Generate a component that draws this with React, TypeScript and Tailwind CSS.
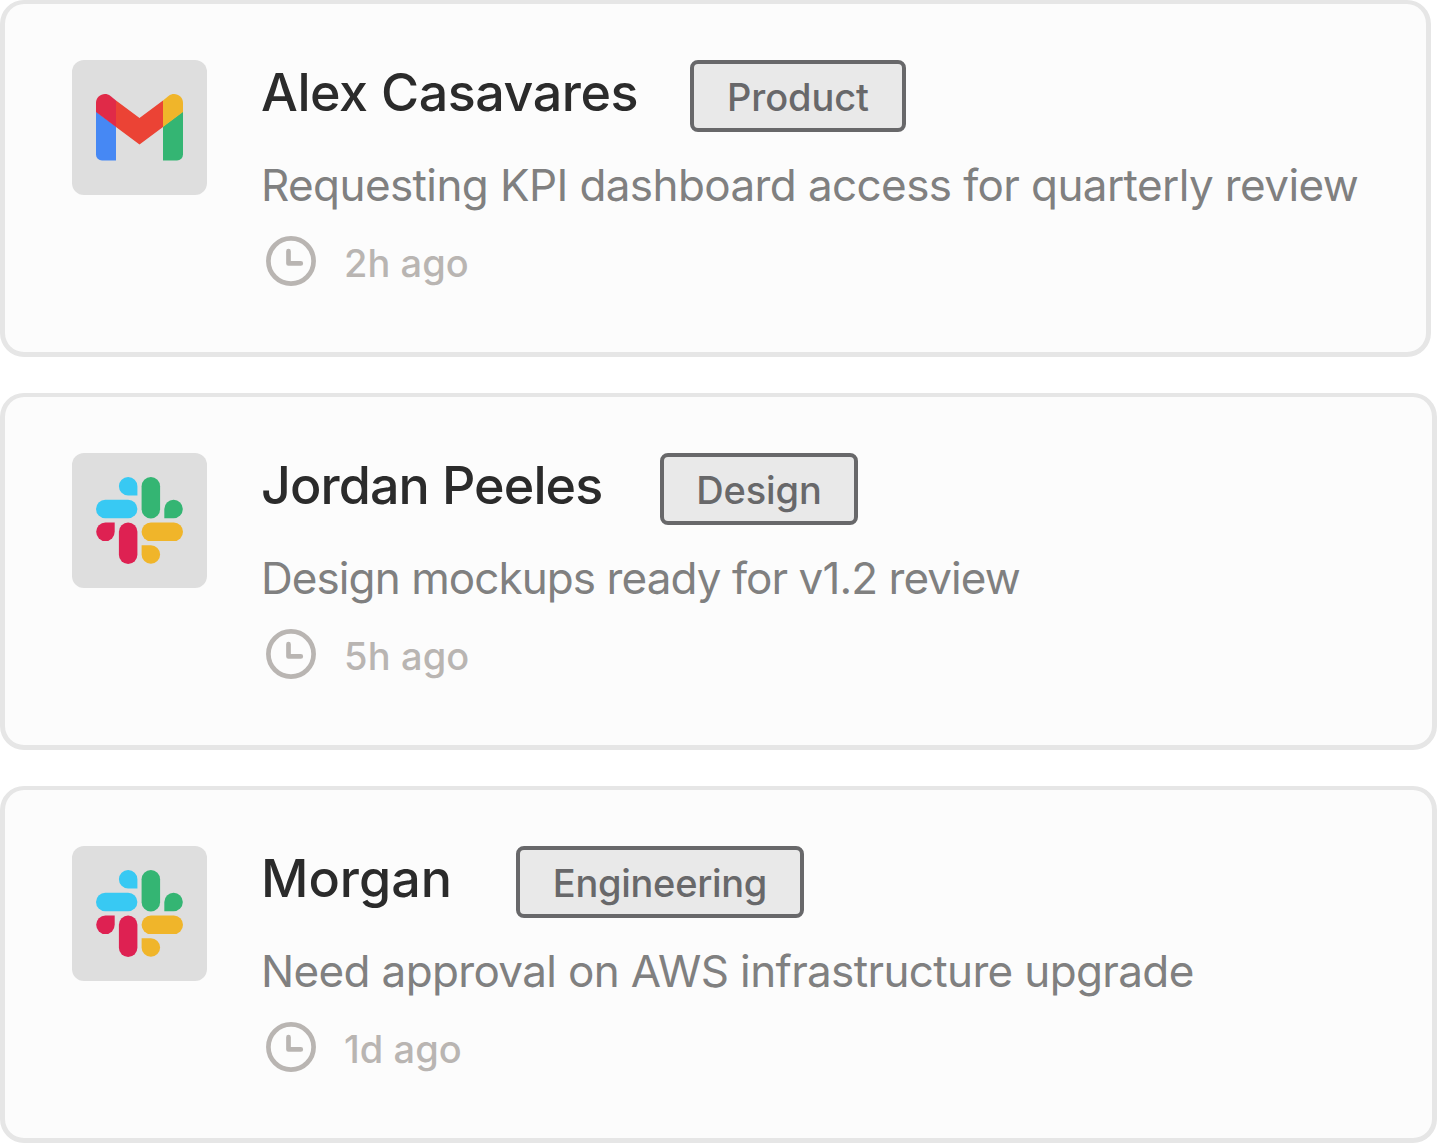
import clsx from 'clsx';

type Source = 'gmail' | 'slack';

type Request = {
	id: number;
	source: Source;
	name: string;
	tag: string;
	message: string;
	time: string;
	cardClass: string;
	nameClass: string;
	tagClass: string;
	messageClass: string;
	timeClass: string;
};

const REQUESTS: Request[] = [
	{
		id: 1,
		source: 'gmail',
		name: 'Alex Casavares',
		tag: 'Product',
		message: 'Requesting KPI dashboard access for quarterly review',
		time: '2h ago',
		cardClass: 'w-[1431px]',
		nameClass: 'w-[429px] tracking-[-0.45px]',
		tagClass: 'w-[216px] tracking-[-0.1px]',
		messageClass: 'tracking-[-0.6px]',
		timeClass: 'tracking-[0.05px]',
	},
	{
		id: 2,
		source: 'slack',
		name: 'Jordan Peeles',
		tag: 'Design',
		message: 'Design mockups ready for v1.2 review',
		time: '5h ago',
		cardClass: 'w-full',
		nameClass: 'w-[399px] tracking-[-0.9px]',
		tagClass: 'w-[198px] tracking-[-0.1px]',
		messageClass: 'tracking-[-0.92px]',
		timeClass: 'tracking-[0.15px]',
	},
	{
		id: 3,
		source: 'slack',
		name: 'Morgan',
		tag: 'Engineering',
		message: 'Need approval on AWS infrastructure upgrade',
		time: '1d ago',
		cardClass: 'w-full',
		nameClass: 'w-[255px]',
		tagClass: 'w-[288px] tracking-[-0.3px]',
		messageClass: 'tracking-[-0.64px]',
		timeClass: 'tracking-[0.05px]',
	},
];

function GmailLogo() {
	return (
		<svg viewBox="0 0 87 66.5" className="h-[66.5px] w-[87px]">
			<path fill="#4688f4" d="M0 17.5 20 32.5V66.5H6a6 6 0 0 1-6-6Z" />
			<path fill="#34b573" d="M87 17.5 67 32.5V66.5H81a6 6 0 0 0 6-6Z" />
			<path fill="#e02a48" d="M0 18V9C0 1.5 8.5-2.5 14.5 2L20 6.5V33Z" />
			<path fill="#f0b52a" d="M87 18V9C87 1.5 78.5-2.5 72.5 2L67 6.5V33Z" />
			<path fill="#eb4335" d="M20 6.5 43.5 24 67 6.5V33L43.5 50.5 20 33Z" />
		</svg>
	);
}

function SlackLogo() {
	return (
		<svg viewBox="0 0 87 87" className="size-[87px]">
			<g fill="#38c9f3">
				<path d="M32.15 0a9.25 9.25 0 0 1 9.25 9.25V18.5H32.15a9.25 9.25 0 0 1 0-18.5Z" />
				<rect y="22.8" width="41.4" height="18.5" rx="9.25" />
			</g>
			<g fill="#34b573">
				<rect x="45.6" width="18.5" height="41.4" rx="9.25" />
				<path d="M68.3 41.3V32.05a9.25 9.25 0 1 1 9.25 9.25Z" />
			</g>
			<g fill="#de2152">
				<path d="M18.7 45.6V54.85a9.25 9.25 0 1 1-9.25-9.25Z" />
				<rect x="22.9" y="45.6" width="18.5" height="41.4" rx="9.25" />
			</g>
			<g fill="#f0b52a">
				<rect x="45.6" y="45.6" width="41.4" height="18.5" rx="9.25" />
				<path d="M45.6 68.3H54.85a9.25 9.25 0 1 1-9.25 9.25Z" />
			</g>
		</svg>
	);
}

function ClockIcon() {
	return (
		<svg viewBox="0 0 50 50" fill="none" stroke="#b9b5b2" className="size-[50px]">
			<circle cx="25" cy="25" r="22.6" strokeWidth="4.7" />
			<path d="M22.5 15.2V27.4H34.8" strokeWidth="4.7" strokeLinecap="round" strokeLinejoin="round" />
		</svg>
	);
}

function RequestCard({ request }: { request: Request }) {
	return (
		<article
			className={clsx(
				'flex h-[357px] gap-[54px] rounded-[24px] border-5 border-t-4 border-[#e6e6e6] bg-[#fcfcfc] pt-14 pl-[67px]',
				request.cardClass,
			)}
		>
			<div className="flex size-[135px] shrink-0 items-center justify-center rounded-xl bg-[#dedede]">
				{request.source === 'gmail' ? <GmailLogo /> : <SlackLogo />}
			</div>
			<div className="flex flex-col whitespace-nowrap">
				<div className="flex h-[72px]">
					<h2
						className={clsx(
							'shrink-0 text-[52px] leading-[66px] font-[550] text-[#2b2b2b]',
							request.nameClass,
						)}
					>
						{request.name}
					</h2>
					<span
						className={clsx(
							'flex h-[72px] items-center justify-center rounded-lg border-4 border-[#68686a] bg-[#e9e9e9] pt-0.5 text-[38px] leading-none font-medium text-[#68686a]',
							request.tagClass,
						)}
					>
						{request.tag}
					</span>
				</div>
				<p className={clsx('mt-[25px] text-[44px] leading-[56px] text-[#808080]', request.messageClass)}>
					{request.message}
				</p>
				<div className="mt-[23px] ml-[5px] flex items-center gap-7">
					<ClockIcon />
					<span
						className={clsx('pt-1 text-[38px] leading-[46px] font-medium text-[#b9b5b2]', request.timeClass)}
					>
						{request.time}
					</span>
				</div>
			</div>
		</article>
	);
}

function App() {
	return (
		<main className="flex min-h-[1143px] flex-col gap-9 bg-white font-['Inter',sans-serif]">
			{REQUESTS.map((request) => (
				<RequestCard key={request.id} request={request} />
			))}
		</main>
	);
}

export default App;
